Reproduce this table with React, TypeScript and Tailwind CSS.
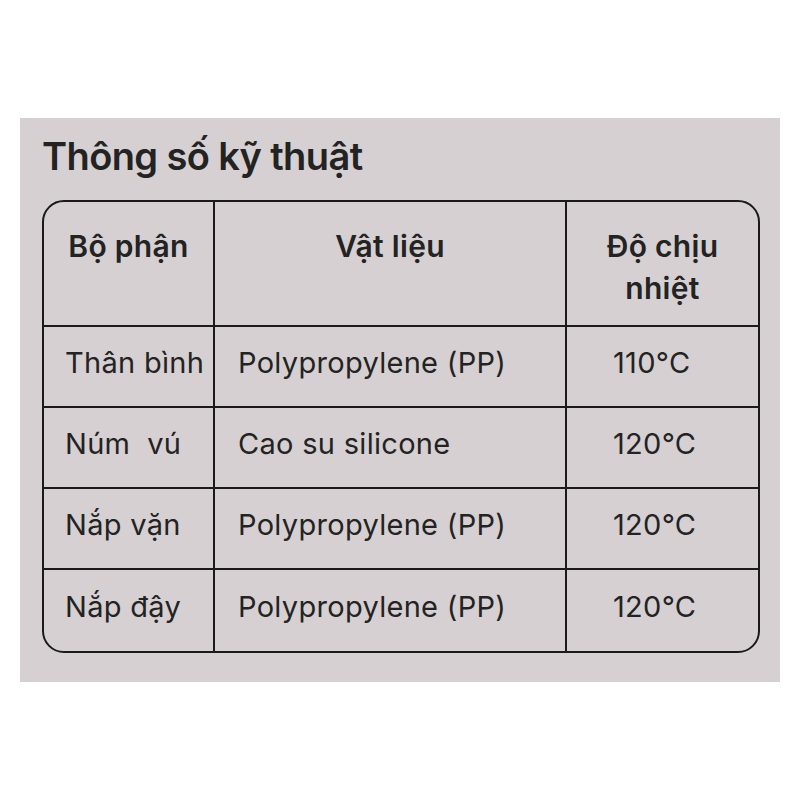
const rows = [
  { part: 'Thân bình', material: 'Polypropylene (PP)', temp: '110°C' },
  { part: 'Núm  vú', material: 'Cao su silicone', temp: '120°C' },
  { part: 'Nắp vặn', material: 'Polypropylene (PP)', temp: '120°C' },
  { part: 'Nắp đậy', material: 'Polypropylene (PP)', temp: '120°C' },
];

export default function App() {
  return (
    <div className="h-[800px] w-[800px] bg-white pt-[118px] font-['Inter',sans-serif] text-[#232323]">
      <section className="mx-[20px] h-[564px] bg-[#d6d0d2] pl-[22px] pr-[20px] pt-[14px]">
        <h1 className="h-[48px] text-[38px] leading-[48px] font-semibold tracking-[-0.6px]">
          Thông số kỹ thuật
        </h1>

        <div className="mt-[20px] grid w-[718px] grid-cols-[171px_352px_1fr] overflow-hidden rounded-[22px] border-2 border-[#1a1a1a] text-[29px] tracking-[0.3px]">
          <div className="h-[125px] border-r-2 border-b-2 border-[#1a1a1a] pt-[23px] text-center text-[30px] leading-[42px] font-semibold">
            Bộ phận
          </div>
          <div className="h-[125px] border-r-2 border-b-2 border-[#1a1a1a] pt-[23px] text-center text-[30px] leading-[42px] font-semibold">
            Vật liệu
          </div>
          <div className="h-[125px] border-b-2 border-[#1a1a1a] pt-[23px] text-center text-[30px] leading-[42px] font-semibold">
            Độ chịu
            <br />
            nhiệt
          </div>

          {rows.map((row, i) => {
            const last = i === rows.length - 1;
            return [
              <div
                key={`p${i}`}
                className={`flex h-[81px] items-center border-r-2 border-[#1a1a1a] pb-[7px] pl-[21px] whitespace-pre ${last ? '' : 'border-b-2'}`}
              >
                {row.part}
              </div>,
              <div
                key={`m${i}`}
                className={`flex h-[81px] items-center border-r-2 border-[#1a1a1a] pb-[7px] pl-[23px] ${last ? '' : 'border-b-2'}`}
              >
                {row.material}
              </div>,
              <div
                key={`t${i}`}
                className={`flex h-[81px] items-center border-[#1a1a1a] pb-[7px] pl-[46px] ${last ? '' : 'border-b-2'}`}
              >
                {row.temp}
              </div>,
            ];
          })}
        </div>
      </section>
    </div>
  );
}
